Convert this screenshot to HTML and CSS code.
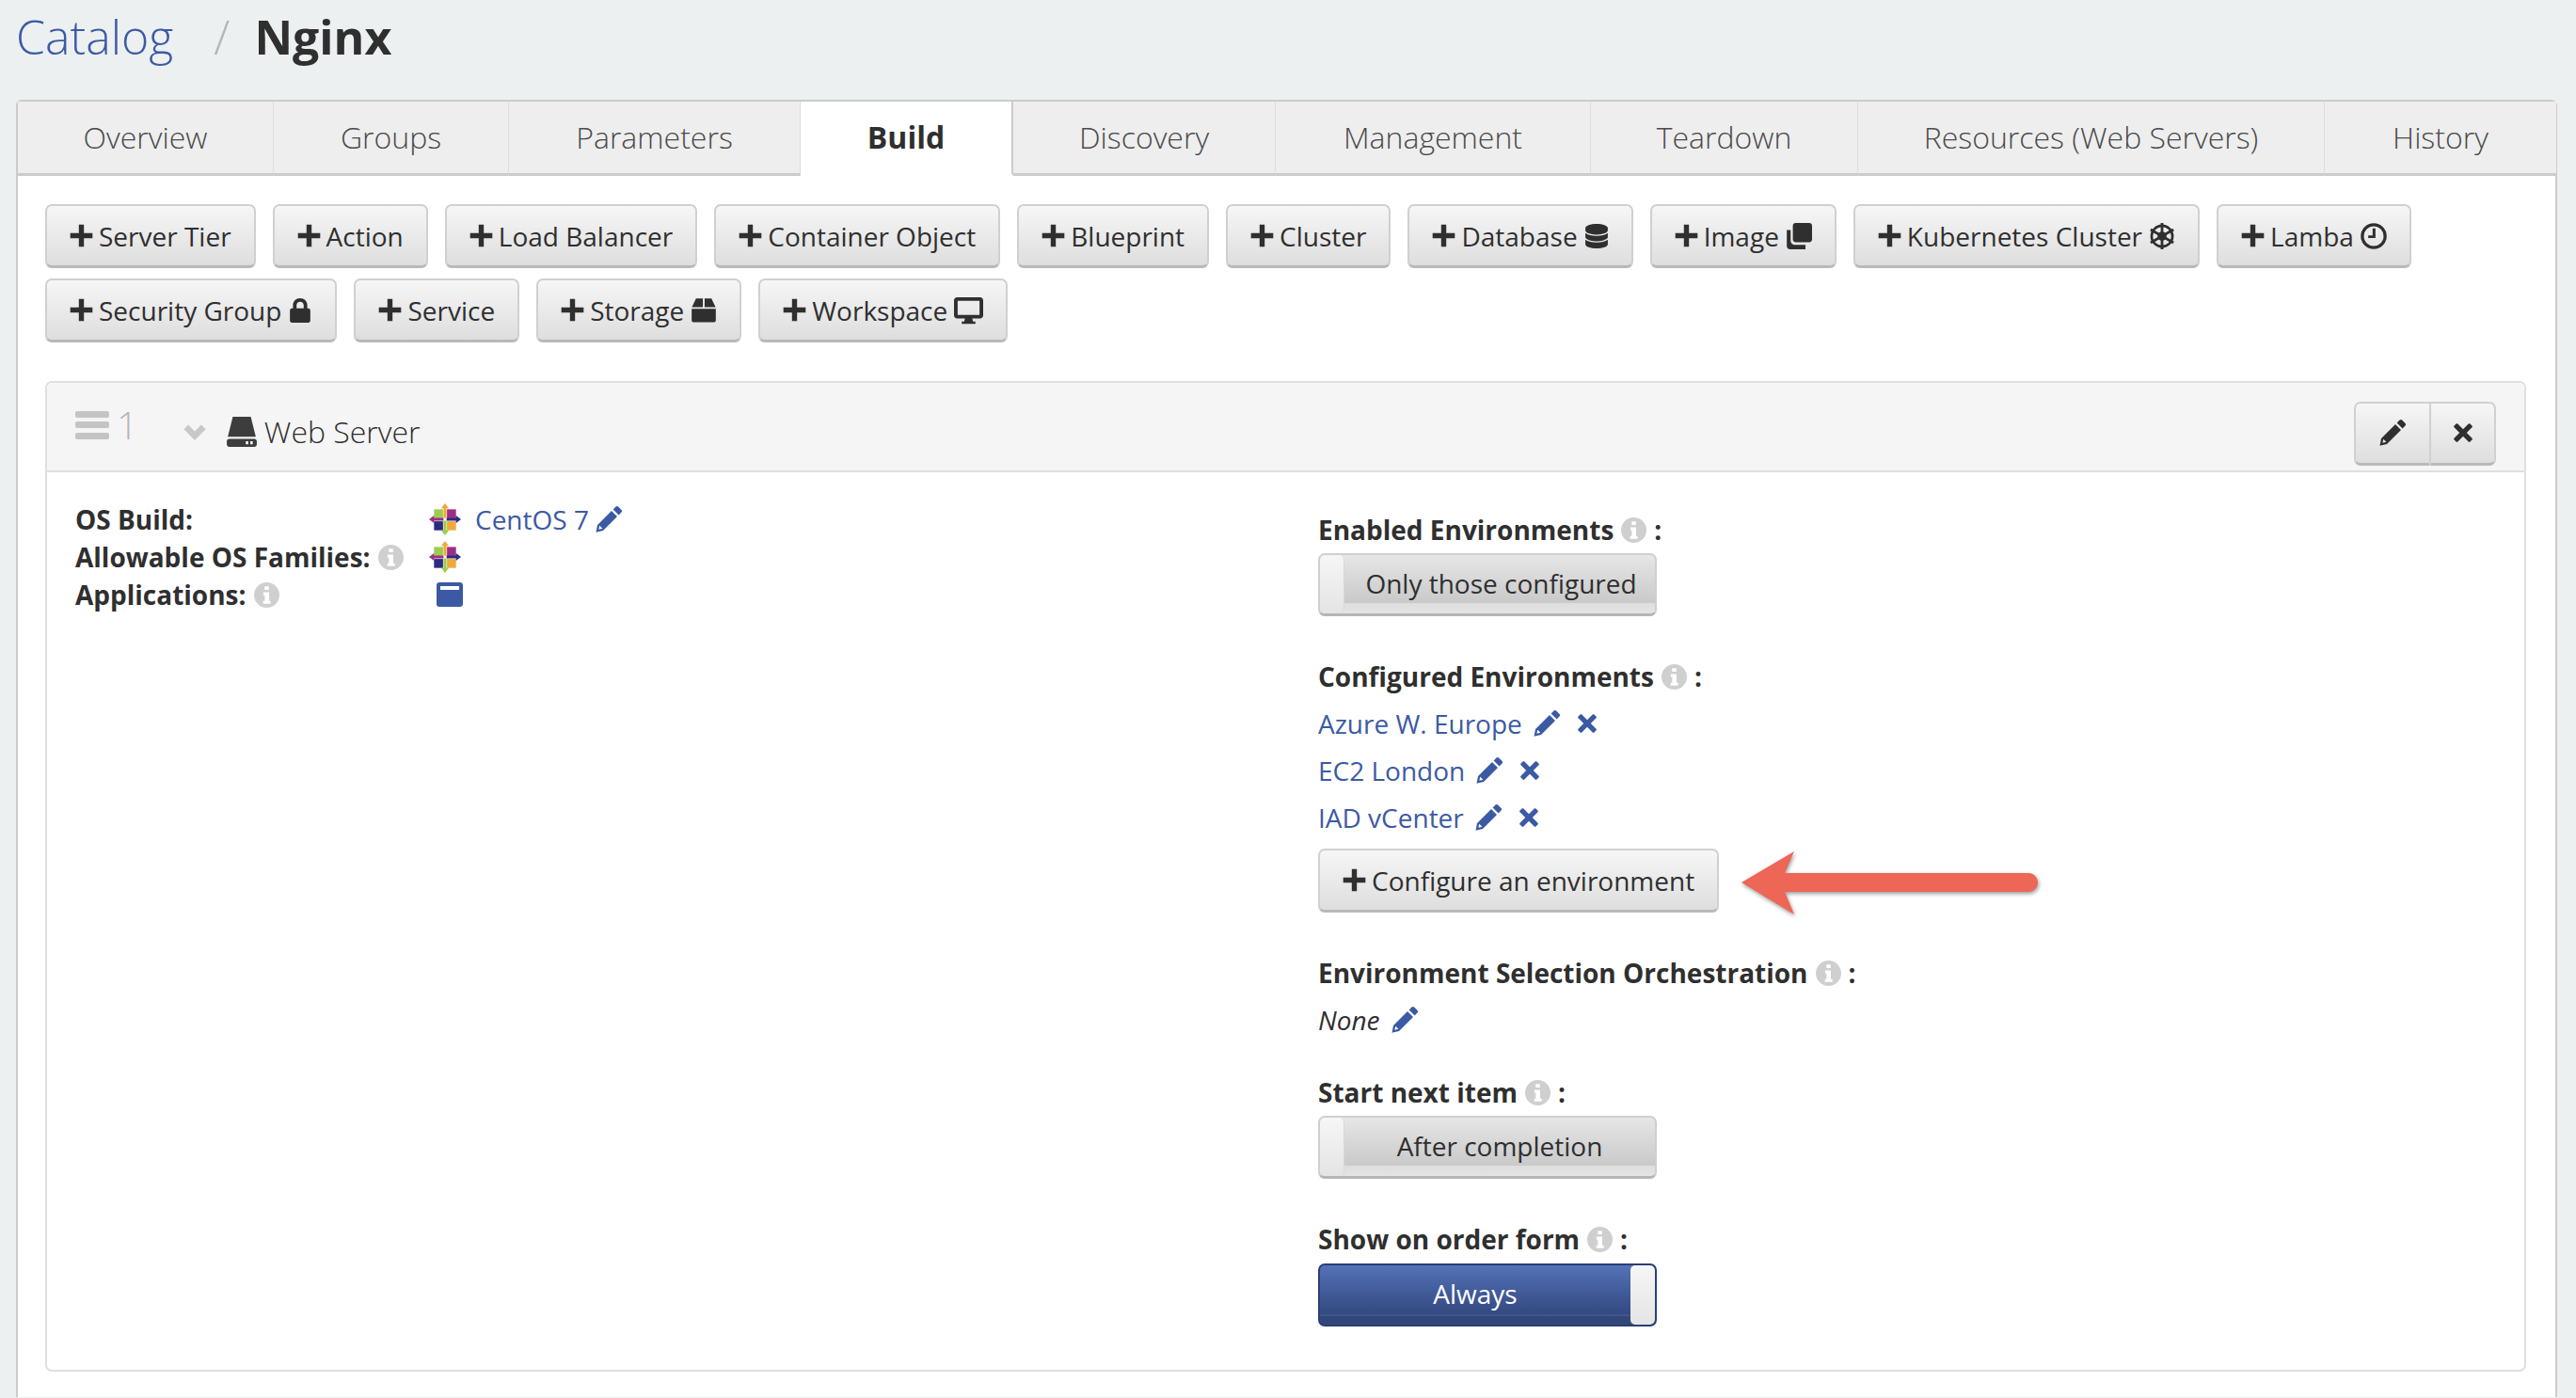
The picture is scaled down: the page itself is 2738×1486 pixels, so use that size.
FILE: index.html
```html
<!DOCTYPE html>
<html lang="en">
<head>
<meta charset="utf-8">
<title>Nginx</title>
<link rel="stylesheet" href="styles.css">
</head>
<body>
<svg class="defs" width="0" height="0">
  <symbol id="plus" viewBox="0 0 24 24"><path d="M9.6 1.5h4.8v8.1h8.1v4.8h-8.1v8.1H9.6v-8.1H1.5V9.6h8.1z"/></symbol>
  <symbol id="pencil" viewBox="0 0 24 24"><path d="M18 1.2c.6-.6 1.500-.6 2.100 0l2.700 2.700c.6.6.6 1.500 0 2.100l-2.300 2.300-4.800-4.800zM14.400 4.800l4.800 4.800L7.200 21.600 1.200 23l1.200-6.200zM4.200 17.300l-.7 3.300 3.200-.8z" fill-rule="evenodd"/></symbol>
  <symbol id="times" viewBox="0 0 24 24"><path d="M6.300 2.500 12 8.200l5.700-5.700c.5-.5 1.200-.5 1.700 0l2.100 2.100c.5.5.5 1.200 0 1.700L15.800 12l5.700 5.700c.5.5.5 1.200 0 1.700l-2.100 2.100c-.5.5-1.200.5-1.700 0L12 15.800l-5.700 5.700c-.5.5-1.200.5-1.700 0l-2.100-2.100c-.5-.5-.5-1.200 0-1.700L8.200 12 2.500 6.300c-.5-.5-.5-1.200 0-1.700l2.100-2.100c.5-.5 1.200-.5 1.700 0z"/></symbol>
  <symbol id="lock" viewBox="0 0 24 24"><path d="M12 0C8 0 5 2.900 5 6.800V10H4C2.900 10 2 10.900 2 12v10c0 1.100.9 2 2 2h16c1.100 0 2-.9 2-2V12c0-1.100-.9-2-2-2h-1V6.800C19 2.900 16 0 12 0zM8.500 10V6.800C8.500 4.800 10 3.400 12 3.400s3.500 1.400 3.500 3.400V10z" fill-rule="evenodd"/></symbol>
  <symbol id="box" viewBox="0 0 24 24"><path d="M5 1h6.200v8H1.200zM12.800 1H19l3.800 8H12.800zM1 10.500h22V21c0 1-.8 1.800-1.800 1.800H2.800C1.800 22.800 1 22 1 21z"/></symbol>
  <symbol id="desktop" viewBox="0 0 24 24"><path d="M2.500 1.500h19C22.900 1.500 24 2.600 24 4v12.500c0 1.400-1.100 2.500-2.500 2.500H15l.6 2.500h2v2H6.400v-2h2L9 19H2.500C1.100 19 0 17.900 0 16.500V4c0-1.400 1.100-2.500 2.500-2.500zm.5 3V16h18V4.500z" fill-rule="evenodd"/></symbol>
  <symbol id="database" viewBox="0 0 24 24"><path d="M12 0c6 0 11 1.800 11 4v2.500c0 2.200-5 4-11 4S1 8.700 1 6.500V4C1 1.800 6 0 12 0zM1 9c2.200 1.800 6.400 2.800 11 2.800S20.800 10.800 23 9v4c0 2.200-5 4-11 4S1 15.200 1 13zM1 15.500c2.200 1.800 6.400 2.800 11 2.800s8.800-1 11-2.800V20c0 2.200-5 4-11 4S1 22.200 1 20z"/></symbol>
  <symbol id="clone" viewBox="0 0 24 24"><path d="M9 0h12.500C22.900 0 24 1.100 24 2.500V15c0 1.400-1.100 2.500-2.500 2.500H9c-1.400 0-2.500-1.100-2.500-2.500V2.500C6.500 1.100 7.600 0 9 0zM1 6.500h3.500V16c0 2.200 1.800 4 4 4h9.500v4H4c-1.700 0-3-1.300-3-3z"/></symbol>
  <symbol id="helm" viewBox="0 0 24 24"><g fill="none" stroke="currentColor" stroke-width="2.300"><circle cx="12" cy="12" r="9.500"/><circle cx="12" cy="12" r="3"/><path d="M12 0v24M1.600 6l20.800 12M22.400 6 1.600 18" stroke-width="2.400"/></g></symbol>
  <symbol id="clock" viewBox="0 0 24 24"><circle cx="12" cy="12" r="10.400" fill="none" stroke="currentColor" stroke-width="2.800"/><path d="M11 5h2.600v8.800H7v-2.500h4z"/></symbol>
  <symbol id="info" viewBox="0 0 24 24"><circle cx="12" cy="12" r="12" fill="#cfcfcf"/><path fill="#fff" d="M10 3.800h4v3.400h-4zM8.800 9.400h5.400v8.200h1.500v2.700H8.600v-2.700h1.500v-5.400H8.800z"/></symbol>
  <symbol id="bars" viewBox="0 0 36 32"><rect y="1" width="36" height="7" rx="2"/><rect y="12" width="36" height="7" rx="2"/><rect y="24" width="36" height="7" rx="2"/></symbol>
  <symbol id="chevron" viewBox="0 0 24 18"><path d="M12 17 1 6l4.500-4.500L12 8l6.500-6.500L23 6z"/></symbol>
  <symbol id="server" viewBox="0 0 32 32"><path d="M7 1h18l5 20H2zM3.500 23h25c1.400 0 2.500 1.100 2.500 2.500v3c0 1.400-1.100 2.500-2.500 2.500h-25C2.100 31 1 29.900 1 28.500v-3C1 24.100 2.100 23 3.500 23zM20 25.500v3h2.500v-3zM24.500 25.500v3H27v-3z" fill-rule="evenodd"/></symbol>
  <symbol id="centos" viewBox="0 0 32 32">
    <rect x="5" y="6" width="9" height="9" fill="#9ccd4e"/><rect x="18" y="6" width="9" height="9" fill="#9c2f85"/>
    <rect x="5" y="18" width="9" height="9" fill="#2c2b80"/><rect x="18" y="18" width="9" height="9" fill="#efa93a"/>
    <path fill="#efa93a" d="M16 0l3.800 5h-2.300v9.500h-3V5h-2.300z"/><path fill="#2c2b80" d="M32 16l-5 3.800v-2.300h-9.500v-3H27v-2.300z"/>
    <path fill="#9ccd4e" d="M16 32l-3.800-5h2.300v-9.500h3V27h2.300z"/><path fill="#9c2f85" d="M0 16l5-3.800v2.300h9.500v3H5v2.300z"/>
  </symbol>
  <symbol id="app" viewBox="0 0 28 26"><path fill-rule="evenodd" d="M3 0h22c1.700 0 3 1.300 3 3v20c0 1.700-1.300 3-3 3H3c-1.700 0-3-1.300-3-3V3c0-1.700 1.300-3 3-3zm1 4v4h20V4z"/></symbol>
</svg>

<header class="crumbs">
  <a class="crumb-link" href="#">Catalog</a>
  <span class="crumb-sep">/</span>
  <span class="crumb-current">Nginx</span>
</header>

<nav class="tabs">
  <a class="tab t1" href="#">Overview</a>
  <a class="tab t2" href="#">Groups</a>
  <a class="tab t3" href="#">Parameters</a>
  <a class="tab t4 active" href="#">Build</a>
  <a class="tab t5" href="#">Discovery</a>
  <a class="tab t6" href="#">Management</a>
  <a class="tab t7" href="#">Teardown</a>
  <a class="tab t8" href="#">Resources (Web Servers)</a>
  <a class="tab t9" href="#">History</a>
</nav>

<main class="panel">
  <div class="toolbar">
    <button class="btn"><svg class="ic ic-plus"><use href="#plus"/></svg>Server Tier</button>
    <button class="btn"><svg class="ic ic-plus"><use href="#plus"/></svg>Action</button>
    <button class="btn"><svg class="ic ic-plus"><use href="#plus"/></svg>Load Balancer</button>
    <button class="btn"><svg class="ic ic-plus"><use href="#plus"/></svg>Container Object</button>
    <button class="btn"><svg class="ic ic-plus"><use href="#plus"/></svg>Blueprint</button>
    <button class="btn"><svg class="ic ic-plus"><use href="#plus"/></svg>Cluster</button>
    <button class="btn"><svg class="ic ic-plus"><use href="#plus"/></svg>Database<svg class="ic ic-end"><use href="#database"/></svg></button>
    <button class="btn"><svg class="ic ic-plus"><use href="#plus"/></svg>Image<svg class="ic ic-end ic-lg"><use href="#clone"/></svg></button>
    <button class="btn"><svg class="ic ic-plus"><use href="#plus"/></svg>Kubernetes Cluster<svg class="ic ic-end ic-lg"><use href="#helm"/></svg></button>
    <button class="btn"><svg class="ic ic-plus"><use href="#plus"/></svg>Lamba<svg class="ic ic-end ic-lg"><use href="#clock"/></svg></button>
    <button class="btn"><svg class="ic ic-plus"><use href="#plus"/></svg>Security Group<svg class="ic ic-end"><use href="#lock"/></svg></button>
    <button class="btn"><svg class="ic ic-plus"><use href="#plus"/></svg>Service</button>
    <button class="btn"><svg class="ic ic-plus"><use href="#plus"/></svg>Storage<svg class="ic ic-end ic-lg"><use href="#box"/></svg></button>
    <button class="btn"><svg class="ic ic-plus"><use href="#plus"/></svg>Workspace<svg class="ic ic-end ic-xl"><use href="#desktop"/></svg></button>
  </div>

  <section class="card">
    <div class="card-head">
      <svg class="ic-bars"><use href="#bars"/></svg>
      <span class="seq">1</span>
      <svg class="ic-chev"><use href="#chevron"/></svg>
      <svg class="ic-server"><use href="#server"/></svg>
      <span class="card-title">Web Server</span>
      <div class="btn-group">
        <button class="btn btn-icon"><svg class="ic-md"><use href="#pencil"/></svg></button>
        <button class="btn btn-icon"><svg class="ic-md"><use href="#times"/></svg></button>
      </div>
    </div>
    <div class="card-body">
      <div class="summary">
        <div class="lbl">OS Build:</div>
        <div class="val"><svg class="ic-os"><use href="#centos"/></svg><a class="link os-link" href="#">CentOS 7</a><svg class="ic-edit"><use href="#pencil"/></svg></div>
        <div class="lbl">Allowable OS Families:<svg class="ic-info"><use href="#info"/></svg></div>
        <div class="val"><svg class="ic-os"><use href="#centos"/></svg></div>
        <div class="lbl">Applications:<svg class="ic-info"><use href="#info"/></svg></div>
        <div class="val"><svg class="ic-app"><use href="#app"/></svg></div>
      </div>
      <div class="settings">
        <div class="lbl">Enabled Environments<svg class="ic-info after"><use href="#info"/></svg><span class="colon">:</span></div>
        <div class="toggle off"><span class="knob"></span><span class="toggle-text shifted">Only those configured</span></div>

        <div class="lbl gap">Configured Environments<svg class="ic-info after"><use href="#info"/></svg><span class="colon">:</span></div>
        <div class="env-list">
          <div class="env"><a class="link" href="#">Azure W. Europe</a><svg class="ic-edit wide"><use href="#pencil"/></svg><svg class="ic-x"><use href="#times"/></svg></div>
          <div class="env"><a class="link" href="#">EC2 London</a><svg class="ic-edit wide"><use href="#pencil"/></svg><svg class="ic-x"><use href="#times"/></svg></div>
          <div class="env"><a class="link" href="#">IAD vCenter</a><svg class="ic-edit wide"><use href="#pencil"/></svg><svg class="ic-x"><use href="#times"/></svg></div>
        </div>
        <div class="cfg-row">
          <button class="btn"><svg class="ic ic-plus"><use href="#plus"/></svg>Configure an environment</button>
          <svg class="arrow" viewBox="0 0 320 76">
            <path d="M1 38 57 5 47 28H306c5.500 0 10 4.500 10 10s-4.500 10-10 10H47l10 24z"/>
          </svg>
        </div>

        <div class="lbl gap-orch">Environment Selection Orchestration<svg class="ic-info after"><use href="#info"/></svg><span class="colon">:</span></div>
        <div class="env none-row"><em class="none">None</em><svg class="ic-edit wide"><use href="#pencil"/></svg></div>

        <div class="lbl gap-sm">Start next item<svg class="ic-info after"><use href="#info"/></svg><span class="colon">:</span></div>
        <div class="toggle off"><span class="knob"></span><span class="toggle-text">After completion</span></div>

        <div class="lbl gap">Show on order form<svg class="ic-info after"><use href="#info"/></svg><span class="colon">:</span></div>
        <div class="toggle on mid"><span class="toggle-text">Always</span><span class="knob"></span></div>
      </div>
    </div>
  </section>
</main>
</body>
</html>
```

FILE: styles.css
```css
* { box-sizing: border-box; }
html, body { margin: 0; height: 1486px; overflow: hidden; }
body {
  padding: 0 20px 0 17px;
  background: #ecf0f1;
  color: #2f2f2f;
  font-family: "Open Sans", "Liberation Sans", sans-serif;
  font-size: 28px;
}
.defs { position: absolute; }
svg { fill: currentColor; flex: none; }

.crumbs { height: 106px; display: flex; align-items: flex-start; line-height: 78px; }
.crumb-link { font-size: 50px; font-weight: 300; color: #3c5aa4; text-decoration: none; }
.crumb-sep { font-size: 50px; font-weight: 300; color: #b5b5b5; margin: 0 26px 0 43px; }
.crumb-current { font-size: 50px; font-weight: 700; color: #2f2f2f; }

.tabs {
  display: flex; height: 81px;
  border: 2px solid #cbcbcb; border-bottom: 0; border-radius: 6px 6px 0 0;
  border-right-width: 1px;
}
.tab {
  display: flex; align-items: center; justify-content: center;
  font-size: 32px; font-weight: 300; color: #4a4a4a; text-decoration: none;
  background: #eeeeee;
  border-right: 1px solid #dddddd; border-bottom: 3px solid #cbcbcb;
  padding-bottom: 2px;
}
.tab.t1 { width: 272px; }
.tab.t2 { width: 250px; }
.tab.t3 { width: 310px; }
.tab.t4 { width: 226px; }
.tab.t5 { width: 279px; }
.tab.t6 { width: 335px; }
.tab.t7 { width: 284px; }
.tab.t8 { width: 496px; }
.tab.t9 { flex: 1; border-right: 0; }
.tab.active { background: #fff; color: #2f2f2f; font-weight: 700; border-bottom-color: #fff; border-right: 2px solid #cbcbcb; }

.panel {
  background: #fff;
  border: solid #cbcbcb; border-width: 0 2px;
  padding: 30px 31px 27px 29px;
}
.toolbar { display: flex; flex-wrap: wrap; gap: 11px 18px; }
.btn {
  display: inline-flex; align-items: center; height: 68px;
  padding: 0 24px;
  font: 400 28px "Open Sans", "Liberation Sans", sans-serif;
  color: #2f2f2f;
  background: linear-gradient(#f6f6f6, #dedede);
  border: 2px solid #d0d0d0; border-bottom: 3px solid #b9b9b9; border-radius: 7px;
}
.ic { width: 25px; height: 25px; }
.ic-plus { width: 27px; height: 27px; margin: 0 5px 0 -1px; }
.ic-end { margin-left: 7px; width: 26px; height: 26px; }
.ic-end.ic-lg { width: 28px; height: 28px; }
.ic-end.ic-xl { width: 31px; height: 31px; }

.card { margin-top: 41px; border: 2px solid #dfdfdf; border-radius: 7px; height: 1053px; }
.card-head {
  height: 95px; background: #f5f5f5; border-bottom: 2px solid #dfdfdf; border-radius: 7px 7px 0 0;
  display: flex; align-items: center; padding: 0 30px;
}
.ic-bars { width: 36px; height: 32px; color: #c4c4c4; margin-top: -4px; }
.seq { font-size: 40px; font-weight: 300; color: #b5b5b5; margin: -4px 0 0 8px; line-height: 1; }
.ic-chev { width: 28px; height: 19px; color: #c8c8c8; margin: 11px 0 0 46px; }
.ic-server { width: 34px; height: 34px; color: #3d3d3d; margin: 10px 0 0 19px; }
.card-title { font-size: 32px; font-weight: 300; margin: 10px 0 0 7px; }
.btn-group { margin-left: auto; display: flex; margin-top: 14px; }
.btn-icon { width: 81px; justify-content: center; padding: 0; }
.btn-group .btn-icon:first-child { border-radius: 7px 0 0 7px; border-right-width: 1px; }
.btn-group .btn-icon:last-child { width: 70px; border-radius: 0 7px 7px 0; border-left-width: 1px; }
.ic-md { width: 30px; height: 30px; }
.btn-icon:last-child .ic-md { width: 24px; height: 24px; }

.card-body { display: flex; padding: 30px 0 0 30px; }
.summary { width: 1321px; display: grid; grid-template-columns: 376px 1fr; grid-auto-rows: 40px; align-content: start; }
.lbl { font-weight: 700; display: flex; align-items: center; line-height: 40px; height: 40px; }
.val { display: flex; align-items: center; }
.ic-os { width: 34px; height: 36px; margin-left: 0; }
.os-link { margin-left: 15px; }
.ic-app { width: 28px; height: 26px; margin-left: 8px; color: #3c5aa4; }
.link { color: #3c5aa4; text-decoration: none; font-size: 28px; }
.ic-edit { width: 30px; height: 30px; margin-left: 6px; color: #3c5aa4; }
.ic-edit.wide { margin-left: 11px; }
.ic-x { width: 24px; height: 24px; margin-left: 16px; color: #3c5aa4; }
.ic-info { width: 27px; height: 27px; margin-left: 8px; }
.colon { margin-left: 8px; }

.settings { margin-top: 11px; }
.settings .lbl.gap { margin-top: 44px; }
.settings .lbl.gap-orch { margin-top: 38px; }
.settings .lbl.gap-sm { margin-top: 32px; }
.toggle {
  position: relative; width: 360px; height: 67px; margin-top: 5px;
  display: flex; border-radius: 7px; overflow: hidden; border-bottom: 3px solid #b5b5b5;
}
.toggle.mid { margin-top: 6px; }
.toggle.off { background: linear-gradient(#e6e6e6 0, #c9c9c9 83%, #dedede 83%, #e4e4e4 100%); border-top: 2px solid #d0d0d0; border-left: 2px solid #cfcfcf; border-right: 2px solid #cfcfcf; }
.toggle.on { background: linear-gradient(#5472b8 0, #33497f 83%, #4f689f 84%, #314779 86%); border: 2px solid #2b3f75; }
.knob { width: 26px; flex: none; background: linear-gradient(#f6f6f6, #e4e4e4); border-right: 1px solid #d8d8d8; border-radius: 5px; }
.toggle.on .knob { border-right: 0; }
.toggle-text { flex: 1; display: flex; align-items: center; justify-content: center; padding-bottom: 3px; color: #2f2f2f; font-size: 28px; }
.toggle-text.shifted { padding-left: 3px; }
.toggle.on .toggle-text { color: #fff; }
.env-list { margin-top: 5px; }
.env { height: 50px; display: flex; align-items: center; }
.none-row { margin-top: 5px; }
.none { font-style: italic; }
.cfg-row { display: flex; align-items: center; margin-top: 2px; }
.arrow { width: 320px; height: 76px; margin: 4px 0 0 23px; fill: #ee6655; filter: drop-shadow(1px 2px 2px rgba(0,0,0,.4)); overflow: visible; }
```
